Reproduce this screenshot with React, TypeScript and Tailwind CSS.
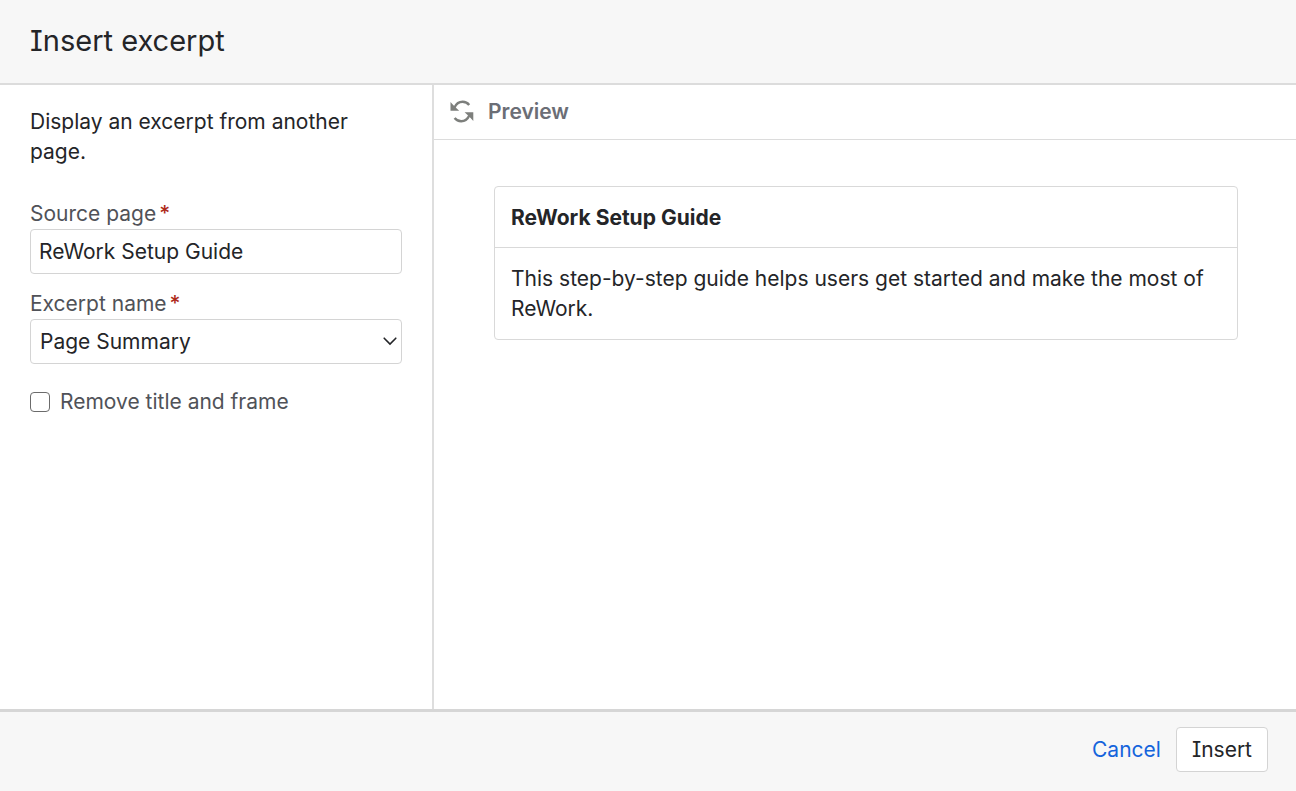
import { useState } from "react"


function RefreshIcon() {
    return (
        <svg className="block w-6 h-6" viewBox="0 0 24 24" fill="none" aria-hidden="true">
            <path d="M4.500 7.500C6.300 3.600 9.300 1.700 12.600 1.700c2.800 0 5 1.100 6.600 3.200" stroke="#7d7f7c" strokeWidth="2.400" />
            <path d="M.5 2v8.700h8.700L6.500 8.300 3.200 5z" fill="#7d7f7c" />
            <path d="M19.300 15.500c-1.800 3.900-4.800 5.800-8.100 5.800-2.800 0-5-1.100-6.600-3.200" stroke="#7d7f7c" strokeWidth="2.400" />
            <path d="M23.300 21v-8.700h-8.700l2.700 2.400 3.300 3.300z" fill="#7d7f7c" />
        </svg>
    )
}

function Required() {
    return <span className="ml-[3px] font-medium text-[#ae2a19]">*</span>
}

export default function App() {
    const [source, setSource] = useState("ReWork Setup Guide")
    const [excerpt, setExcerpt] = useState("Page Summary")
    const [plain, setPlain] = useState(false)

    return (
        <div className="flex flex-col min-h-screen bg-white font-['Inter',sans-serif] [font-feature-settings:'cv08'] text-[21px] leading-[30px] text-[#242528]">
            <header className="px-[30px] pt-[22px] pb-[23px] bg-[#f7f7f7] border-b-2 border-[#dcdcdc]">
                <h1 className="text-[29px] leading-[38px]">Insert excerpt</h1>
            </header>

            <main className="flex flex-1">
                <form className="w-[434px] shrink-0 px-[30px] pt-[22px] border-r-2 border-[#dedede]">
                    <p className="mb-8">Display an excerpt from another page.</p>

                    <label htmlFor="source" className="block text-[#505258]">Source page<Required /></label>
                    <input id="source" type="text" value={source} onChange={(e) => setSource(e.target.value)} className="block w-full h-[45px] mb-[15px] px-2 rounded border border-[#d4d4d4] bg-white" />

                    <label htmlFor="excerpt" className="block text-[#505258]">Excerpt name<Required /></label>
                    <div className="relative mb-[23px]">
                        <select id="excerpt" value={excerpt} onChange={(e) => setExcerpt(e.target.value)} className="block w-full h-[45px] pl-[9px] pr-8 rounded border border-[#d4d4d4] bg-white appearance-none">
                            <option>Page Summary</option>
                        </select>
                        <svg className="absolute right-[5px] top-[18px] w-[14px] h-[9px] pointer-events-none" viewBox="0 0 14 9" fill="none" aria-hidden="true">
                            <path d="M1.200 1.200 7 7l5.800-5.800" stroke="#242528" strokeWidth="1.600" strokeLinecap="round" />
                        </svg>
                    </div>

                    <label className="flex items-center gap-[10px] text-[#505258]">
                        <input type="checkbox" checked={plain} onChange={(e) => setPlain(e.target.checked)} className="w-5 h-5 rounded-[4px] border border-[#6b6b6b] bg-white appearance-none checked:bg-[#1868db]" />
                        Remove title and frame
                    </label>
                </form>

                <section className="flex-1">
                    <div className="flex items-center gap-[14px] px-4 py-3 border-b border-[#dcdcdc]">
                        <button type="button" aria-label="Refresh preview"><RefreshIcon /></button>
                        <h2 className="font-semibold text-[#6b6e76]">Preview</h2>
                    </div>
                    <article className="mt-[46px] ml-[60px] mr-[58px] rounded border border-[#d9d9d9]">
                        <h3 className="px-4 pt-4 pb-[14px] font-bold border-b border-[#d9d9d9]">ReWork Setup Guide</h3>
                        <p className="px-4 pt-4 pb-[15px]">This step-by-step guide helps users get started and make the most of ReWork.</p>
                    </article>
                </section>
            </main>

            <footer className="flex items-center justify-end gap-[15px] pt-[15px] pb-[19px] pr-7 bg-[#f7f7f7] border-t-3 border-[#d6d6d6]">
                <button type="button" className="text-[#1464dc]">Cancel</button>
                <button type="button" className="h-[45px] px-[15px] rounded border border-[#d4d4d4] bg-white">Insert</button>
            </footer>
        </div>
    )
}
